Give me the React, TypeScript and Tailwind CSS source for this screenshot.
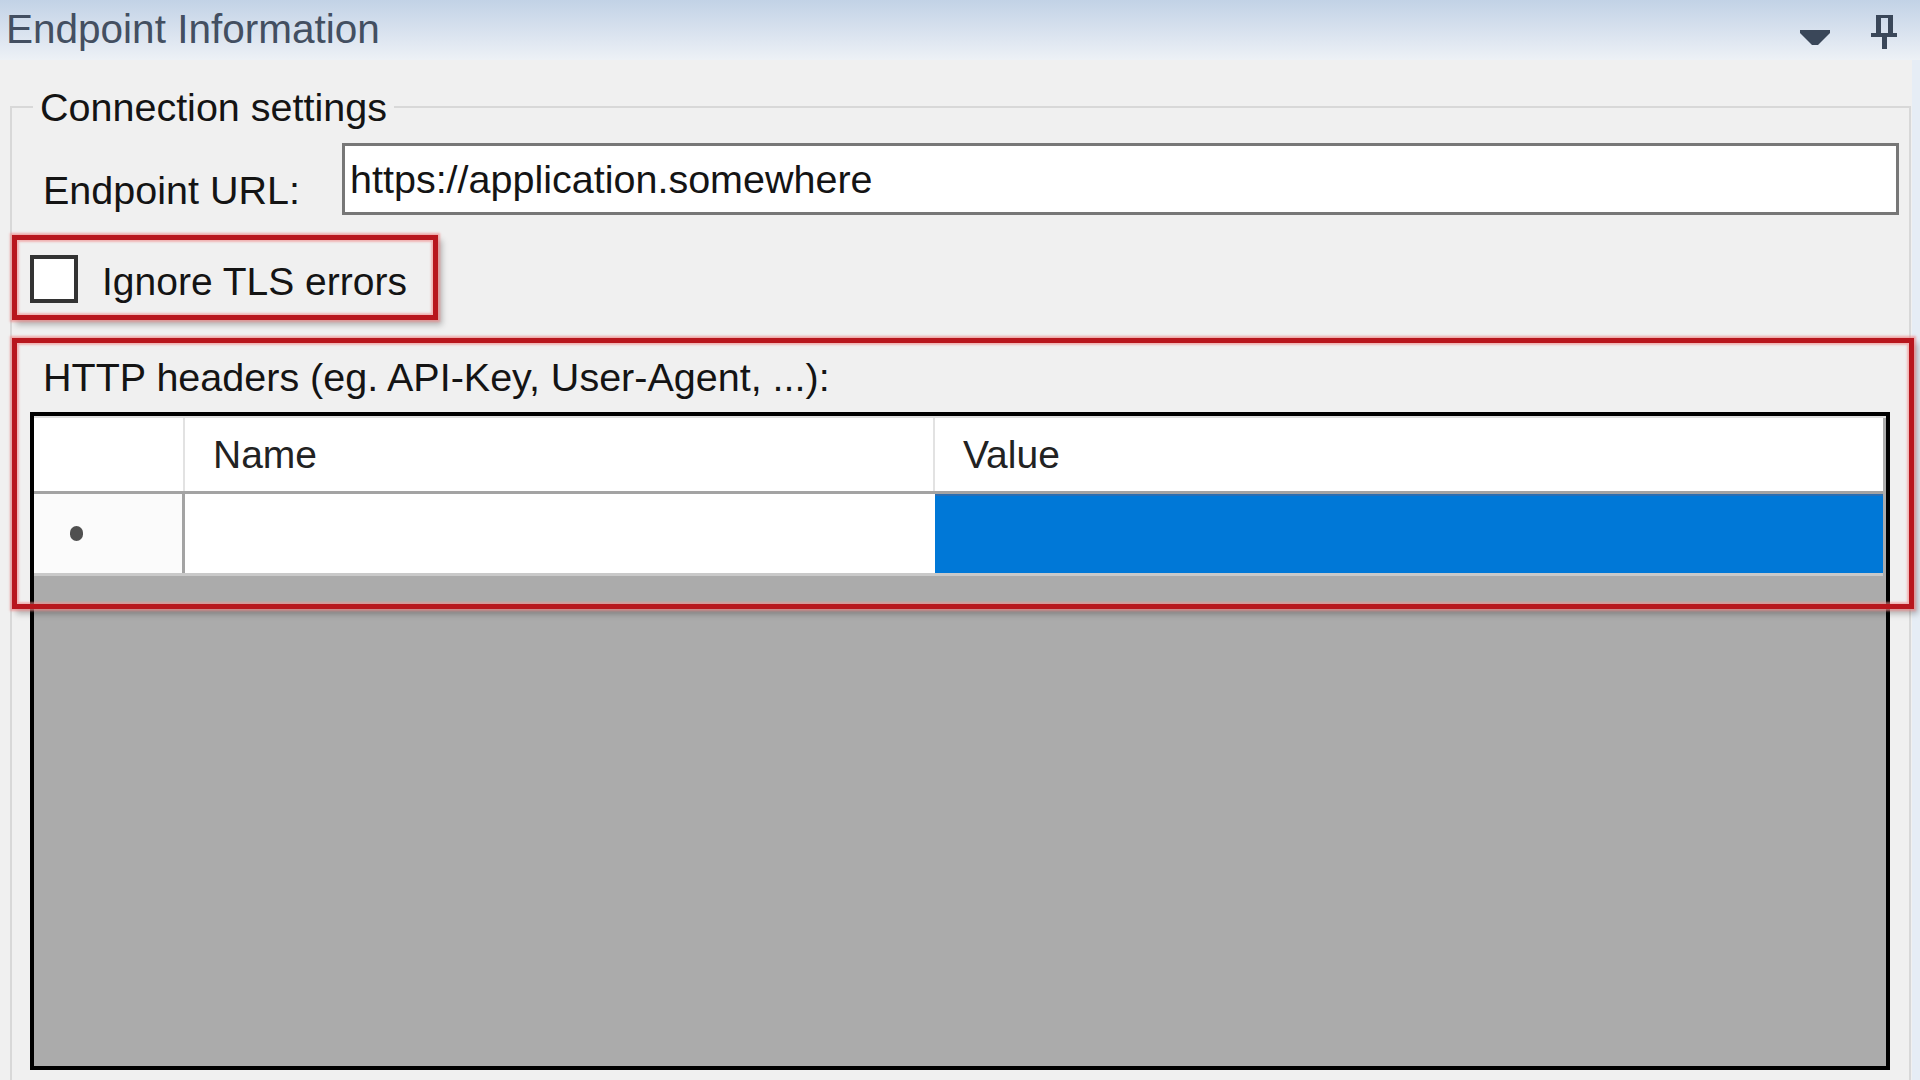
function DropdownIcon() {
  return (
    <svg viewBox="0 0 30 15" className="mt-[30px] h-[15px] w-[30px]">
      <polygon points="0,0 30,0 30,3 18,15 12,15 0,3" fill="#3a4759" />
    </svg>
  );
}

function PinIcon() {
  return (
    <svg viewBox="0 0 26 34" className="ml-[41px] mr-[23px] mt-[15px] h-[34px] w-[26px]">
      <path d="M5 0H22V19H5Z M10 3V19H17V3Z" fill="#3a4759" fillRule="evenodd" />
      <rect x="0" y="18" width="26" height="4" fill="#3a4759" />
      <rect x="11" y="22" width="5" height="12" fill="#3a4759" />
    </svg>
  );
}

function HeadersGrid() {
  return (
    <div className="ml-[18px] mt-[12px] h-[658px] w-[1860px] border-[4px] border-black bg-[#ababab]">
      <div className="flex h-[75px] border-t-2 border-[#dedede]">
        <div className="w-[151px] border-r-2 border-[#e2e2e2] bg-white" />
        <div className="flex w-[750px] items-center border-r-2 border-[#e2e2e2] bg-white pl-[28px] text-[39px] leading-[46px] text-[#222]">
          Name
        </div>
        <div className="flex w-[948px] items-center bg-white pl-[28px] text-[39px] leading-[46px] text-[#222]">
          Value
        </div>
      </div>
      <div className="h-[3px] w-[1849px] bg-[#a3a3a3]" />
      <div className="flex h-[82px] w-[1849px] border-b-[3px] border-[#c9c9c9]">
        <div className="flex w-[151px] items-center border-r-[3px] border-[#a3a3a3] bg-[#fbfbfb] pl-[36px]">
          <span className="h-[15px] w-[13px] rounded-full bg-[#505050]" />
        </div>
        <div className="w-[750px] bg-white" />
        <div className="w-[948px] border-t-2 border-[#2a6eb3] bg-[#0078d7]" />
      </div>
    </div>
  );
}

export default function App() {
  return (
    <div className="relative h-[1080px] w-[1920px] overflow-hidden bg-[#f0f0f0] font-['Liberation_Sans',Arial,sans-serif] text-[#141414]">
      <div className="flex h-[60px] items-start bg-gradient-to-b from-[#c2d2e6] to-[#edf1f6]">
        <div className="pl-[6px] pt-[6px] text-[40.5px] leading-[46px] text-[#434f61]">Endpoint Information</div>
        <div className="ml-auto flex items-start">
          <DropdownIcon />
          <PinIcon />
        </div>
      </div>

      <div className="flex h-[1020px]">
        <div className="flex-1 pl-[10px]">
          <fieldset className="mt-[24px] w-[1901px] border-2 border-[#d8d8d8] pb-[60px]">
            <legend className="ml-[21px] px-[7px] text-[39.5px] leading-[46px]">Connection settings</legend>

            <div className="mt-[13px] flex items-start">
              <div className="ml-[31px] mt-[24px] w-[299px] text-[39.5px] leading-[46px]">Endpoint URL:</div>
              <div className="flex h-[72px] w-[1557px] items-center border-[3px] border-[#777777] bg-white pl-[5px] text-[39.5px] leading-[46px]">
                https://application.somewhere
              </div>
            </div>

            <div className="ml-[18px] mt-[40px] flex items-start">
              <div className="h-[48px] w-[48px] border-[4px] border-[#333333] bg-white" />
              <div className="ml-[24px] mt-[4px] text-[39px] leading-[46px]">Ignore TLS errors</div>
            </div>

            <div className="ml-[31px] mt-[49px] text-[39.5px] leading-[46px]">HTTP headers (eg. API-Key, User-Agent, ...):</div>

            <HeadersGrid />
          </fieldset>
        </div>
        <div className="w-[8px] bg-[#e6edf5]" />
      </div>

      <div className="pointer-events-none absolute left-[12px] top-[235px] h-[85px] w-[426px] border-[5px] border-[#b8161d] shadow-[0_0_2px_2px_rgba(240,140,140,0.7),4px_5px_6px_rgba(0,0,0,0.25),inset_0_0_2px_2px_rgba(240,140,140,0.6)]" />
      <div className="pointer-events-none absolute left-[12px] top-[338px] h-[271px] w-[1902px] border-[5px] border-[#b8161d] shadow-[0_0_2px_2px_rgba(240,140,140,0.7),4px_5px_6px_rgba(0,0,0,0.25),inset_0_0_2px_2px_rgba(240,140,140,0.6)]" />
    </div>
  );
}
